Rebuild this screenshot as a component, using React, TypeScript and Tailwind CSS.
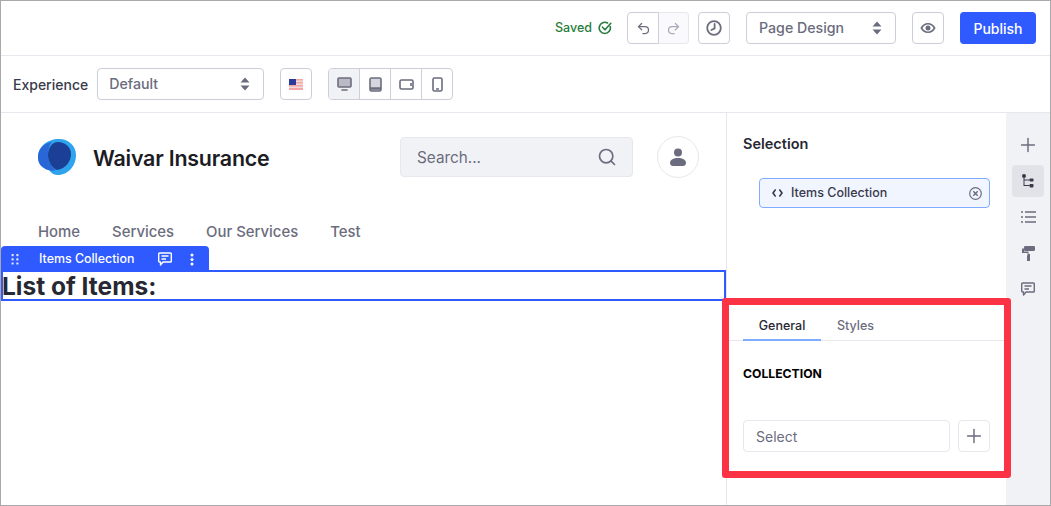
import React from 'react';
import { Undo2, Redo2, Search, Plus } from 'lucide-react';

const Updown = () => (
  <svg width="10" height="14" viewBox="0 0 10 14" fill="#6b6c7e">
    <path d="M5 0.5 9.5 5.5H0.5Z" />
    <path d="M5 13.5 0.5 8.5H9.5Z" />
  </svg>
);

const Clock = () => (
  <svg width="16" height="16" viewBox="0 0 16 16" fill="none" stroke="#6b6c7e" strokeWidth="1.8">
    <circle cx="8" cy="8" r="6.8" />
    <path d="M8.6 4v4.4L5.4 10" strokeLinecap="round" />
  </svg>
);

const Eye = () => (
  <svg width="16" height="12" viewBox="0 0 16 12" fill="#6b6c7e">
    <path fillRule="evenodd" d="M8 1C4.6 1 1.8 3 .4 6 1.8 9 4.6 11 8 11s6.2-2 7.6-5C14.2 3 11.4 1 8 1Zm0 1.6c2.3 0 4.3 1.3 5.5 3.4C12.3 8.1 10.3 9.4 8 9.4S3.7 8.1 2.5 6C3.7 3.9 5.7 2.6 8 2.6Z" />
    <circle cx="8" cy="6" r="2.5" />
  </svg>
);

const SavedCheck = () => (
  <svg width="14" height="14" viewBox="0 0 14 14" fill="none" stroke="#287d3c" strokeWidth="1.6" strokeLinecap="round" strokeLinejoin="round">
    <path d="M12.2 5.5A5.6 5.6 0 1 1 9.5 2" />
    <path d="M4.5 6.2 7 8.8 12.8 2.3" />
  </svg>
);

const Flag = () => (
  <svg width="14" height="11" viewBox="0 0 14 11">
    <rect width="14" height="11" fill="#f4a6a6" />
    <rect y="1.5" width="14" height="1.5" fill="#f2dada" />
    <rect y="4.5" width="14" height="1.5" fill="#f2dada" />
    <rect y="7.5" width="14" height="1.5" fill="#f2dada" />
    <rect width="7" height="6" fill="#2b3a9b" />
  </svg>
);

const Desktop = () => (
  <svg width="15" height="14" viewBox="0 0 15 14" fill="none" stroke="#6b6c7e" strokeWidth="1.6">
    <rect x="1" y="1" width="13" height="9" rx="1" fill="#b9bac4" />
    <path d="M5 13h5" strokeLinecap="round" />
  </svg>
);

const Tablet = () => (
  <svg width="13" height="15" viewBox="0 0 13 15" fill="none" stroke="#6b6c7e" strokeWidth="1.6">
    <rect x="1" y="1" width="11" height="13" rx="1.5" fill="#d5d6dd" />
    <path d="M1 11.5h11" strokeWidth="2.4" />
  </svg>
);

const Landscape = () => (
  <svg width="15" height="11" viewBox="0 0 15 11" fill="none" stroke="#6b6c7e" strokeWidth="1.6">
    <rect x="1" y="1" width="13" height="9" rx="1.5" />
    <path d="M12 4v3" />
  </svg>
);

const Phone = () => (
  <svg width="11" height="15" viewBox="0 0 11 15" fill="none" stroke="#6b6c7e" strokeWidth="1.6">
    <rect x="1" y="1" width="9" height="13" rx="1.5" />
    <path d="M4 12h3" />
  </svg>
);

const Logo = () => (
  <svg width="38" height="36" viewBox="0 0 38 36">
    <path d="M21 0c10 0 17 7 17 16 0 11-8 20-18 20-4 0-7-2-9-5C5 29 0 26 0 18 0 8 9 0 21 0Z" fill="#2ea3ee" />
    <path d="M14 3C6 4 0 10 0 18c0 7 4 11 10 13 3 1 6 1 8 0-5-3-8-8-8-15 0-5 1-10 4-13Z" fill="#2967d6" />
    <path d="M20 3c7 0 13 5 13 12 0 8-6 15-14 16-5-2-9-8-9-15 0-7 4-13 10-13Z" fill="#1b3f94" />
  </svg>
);

const User = () => (
  <svg width="16" height="18" viewBox="0 0 16 18" fill="#6b6c7e">
    <circle cx="8" cy="4.5" r="4" />
    <path d="M8 10c4.5 0 8 1.8 8 5 0 2-1.5 3-3 3H3c-1.5 0-3-1-3-3 0-3.2 3.5-5 8-5Z" />
  </svg>
);

const Comment = ({ color }: { color: string }) => (
  <svg width="14" height="14" viewBox="0 0 14 14" fill="none" stroke={color} strokeWidth="1.4">
    <path d="M1.5 1h11c.4 0 .8.4.8.8v7.4c0 .4-.4.8-.8.8H5L2.5 13v-3h-1c-.4 0-.8-.4-.8-.8V1.8c0-.4.4-.8.8-.8Z" strokeLinejoin="round" />
    <path d="M3.5 4h7M3.5 7h4.5" />
  </svg>
);

const Grip = () => (
  <svg width="8" height="11" viewBox="0 0 8 11" fill="#dfe6ff">
    {[0, 4.2, 8.4].map(y => (
      <React.Fragment key={y}>
        <rect x="0.5" y={y} width="2.2" height="2.2" rx="0.6" />
        <rect x="5.3" y={y} width="2.2" height="2.2" rx="0.6" />
      </React.Fragment>
    ))}
  </svg>
);

const Kebab = () => (
  <svg width="4" height="13" viewBox="0 0 4 13" fill="#fff">
    <circle cx="2" cy="2" r="1.5" />
    <circle cx="2" cy="6.5" r="1.5" />
    <circle cx="2" cy="11" r="1.5" />
  </svg>
);

const Code = () => (
  <svg width="11" height="8" viewBox="0 0 11 8" fill="none" stroke="#393a4a" strokeWidth="1.6" strokeLinecap="round" strokeLinejoin="round">
    <path d="M3.2 1 1 4l2.2 3M7.8 1 10 4 7.8 7" />
  </svg>
);

const CircleX = () => (
  <svg width="13" height="13" viewBox="0 0 13 13" fill="none" stroke="#6b6c7e" strokeWidth="1.2">
    <circle cx="6.5" cy="6.5" r="5.8" />
    <path d="M4.3 4.3l4.4 4.4M8.7 4.3 4.3 8.7" strokeWidth="1.5" />
  </svg>
);

const Tree = () => (
  <svg width="12" height="14" viewBox="0 0 12 14" fill="#393a4a">
    <circle cx="2" cy="2" r="2" />
    <rect x="7.5" y="4.5" width="4" height="3" rx="0.8" />
    <rect x="7.5" y="10" width="4" height="3.4" rx="0.8" />
    <path d="M1.5 3h1v2.5h5v1h-5v4.5h5v1h-6Z" />
  </svg>
);

const ListIcon = () => (
  <svg width="15" height="12" viewBox="0 0 15 12" fill="none" stroke="#6b6c7e" strokeWidth="1.3">
    <path d="M4 1h11M4 6h11M4 11h11M0 1h2M0 6h2M0 11h2" />
  </svg>
);

const Roller = () => (
  <svg width="13" height="15" viewBox="0 0 13 15" fill="#6b6c7e">
    <rect x="2" y="0" width="11" height="5" rx="1.2" />
    <path d="M0 2.5h2v3h4.5v2.5H8v7H5V9.5h.5V7H0Z" />
  </svg>
);

const Btn = ({ children, className = 'justify-center' }: { children: React.ReactNode; className?: string }) => (
  <div className={`flex items-center h-8 border border-[#cdced9] rounded-[4px] bg-white ${className}`}>{children}</div>
);

export default function App() {
  return (
    <div className="w-[1051px] h-[506px] overflow-hidden bg-white border border-[#a9a9ab] flex flex-col relative text-[#6b6c7e]" style={{ fontFamily: 'Inter, "Liberation Sans", sans-serif' }}>
      {/* top bar */}
      <div className="h-[55px] shrink-0 border-b border-[#e7e7ed] flex items-center justify-end pr-[14px]">
        <span className="text-[12.5px] font-medium text-[#287d3c] mr-[6px]">Saved</span>
        <SavedCheck />
        <div className="flex ml-[15px] mr-[9px]">
          <Btn className="justify-center w-8 rounded-r-none"><Undo2 size={15} strokeWidth={2} color="#6b6c7e" /></Btn>
          <div className="w-[30px] h-8 flex items-center justify-center border border-l-0 border-[#e7e7ed] rounded-r-[4px] bg-[#fafafc]"><Redo2 size={15} strokeWidth={2} color="#a7a9bc" /></div>
        </div>
        <Btn className="justify-center w-8 mr-[16px]"><Clock /></Btn>
        <Btn className="justify-between w-[150px] mr-[16px] pl-[12px] pr-[13px]">
          <span className="text-[14.2px] font-medium">Page Design</span>
          <Updown />
        </Btn>
        <Btn className="justify-center w-8 mr-[16px]"><Eye /></Btn>
        <div className="w-[76px] h-8 rounded-[4px] bg-[#2e5aff] text-white text-[14px] font-medium flex items-center justify-center">Publish</div>
      </div>

      {/* experience bar */}
      <div className="h-[57px] shrink-0 border-b border-[#e7e7ed] flex items-center pl-[12px]">
        <span className="text-[14px] font-medium text-[#393a4a] mr-[9px]">Experience</span>
        <Btn className="justify-between w-[167px] pl-[11px] pr-[13px] mr-[16px]">
          <span className="text-[14.2px] font-medium">Default</span>
          <Updown />
        </Btn>
        <Btn className="justify-center w-8 mr-[16px]"><Flag /></Btn>
        <div className="flex h-8 border border-[#cdced9] rounded-[4px] overflow-hidden">
          <div className="w-[30px] flex items-center justify-center bg-[#f1f2f5]"><Desktop /></div>
          <div className="w-[31px] flex items-center justify-center border-l border-[#cdced9]"><Tablet /></div>
          <div className="w-[31px] flex items-center justify-center border-l border-[#cdced9]"><Landscape /></div>
          <div className="w-[31px] flex items-center justify-center border-l border-[#cdced9]"><Phone /></div>
        </div>
      </div>

      <div className="flex flex-1 min-h-0">
        {/* page */}
        <div className="w-[725px] shrink-0 flex flex-col">
          <div className="flex items-center h-[88px] pl-[37px] shrink-0">
            <Logo />
            <span className="ml-[17px] pt-[2px] w-[176px] whitespace-nowrap text-[21.4px] font-semibold text-[#1c1c24] tracking-[-0.2px]">Waivar Insurance</span>
            <div className="ml-[131px] w-[233px] h-10 bg-[#f1f2f5] border border-[#e7e7ed] rounded-[4px] flex items-center justify-between pl-[16px] pr-[15px]">
              <span className="text-[15.3px] pt-[2px]">Search...</span>
              <Search size={20} strokeWidth={2} color="#6b6c7e" />
            </div>
            <div className="ml-[24px] w-[42px] h-[42px] rounded-full border border-[#e7e7ed] flex items-center justify-center"><User /></div>
          </div>
          <div className="flex gap-[32px] pl-[37px] pt-[19px] h-[45px] shrink-0 text-[14.9px] font-medium leading-[24px]">
            <span>Home</span>
            <span>Services</span>
            <span>Our Services</span>
            <span>Test</span>
          </div>
          <div className="w-[208px] h-[25px] shrink-0 -mb-[1px] relative bg-[#2e5aff] rounded-t-[4px] flex items-center text-white pl-[10px] pt-[1px]">
            <Grip />
            <span className="ml-[20px] text-[12.4px] font-medium">Items Collection</span>
            <span className="ml-[24px] flex"><Comment color="#fff" /></span>
            <span className="ml-[18px] flex"><Kebab /></span>
          </div>
          <div className="h-[31px] shrink-0 border-2 border-[#2e5aff] flex items-center pt-[1px] text-[24.5px] font-bold text-[#272833] leading-none"><span className="-ml-[1px]">List of Items:</span></div>
        </div>

        {/* selection panel */}
        <div className="w-[280px] shrink-0 border-l border-[#e7e7ed] flex flex-col">
          <div className="pl-[16px] pt-[21px] text-[14.5px] font-semibold text-[#272833] leading-[20px]">Selection</div>
          <div className="ml-[32px] mt-[24px] w-[231px] h-[30px] rounded-[4px] border border-[#80acff] bg-[#f0f5ff] flex items-center pl-[12px] pr-[7px]">
            <Code />
            <span className="ml-[8px] text-[12.5px] font-medium text-[#393a4a]">Items Collection</span>
            <span className="ml-auto flex"><CircleX /></span>
          </div>
          <div className="mt-[102px] flex px-[16px] h-[31px] border-b border-[#e7e7ed] text-[12.5px] font-medium">
            <div className="w-[78px] h-[31px] pt-[3px] flex items-center justify-center border-b-[2px] border-[#80acff] text-[#272833]">General</div>
            <div className="ml-[16px] flex items-center pt-[3px] h-[29px]">Styles</div>
          </div>
          <div className="pl-[16px] pt-[25px] text-[12.2px] font-bold text-black leading-[16px]">COLLECTION</div>
          <div className="flex pl-[16px] mt-[38px]">
            <div className="w-[207px] h-8 border border-[#e7e7ed] rounded-[4px] flex items-center pl-[12px] text-[14px]">Select</div>
            <div className="ml-[8px] w-8 h-8 border border-[#e7e7ed] rounded-[4px] flex items-center justify-center"><Plus size={22} strokeWidth={1.6} color="#6b6c7e" /></div>
          </div>
        </div>

        {/* rail */}
        <div className="flex-1 bg-[#f1f2f5] flex flex-col items-center pt-[16px] gap-[4px]">
          <div className="w-8 h-8 flex items-center justify-center"><Plus size={22} strokeWidth={1.6} color="#6b6c7e" /></div>
          <div className="w-8 h-8 flex items-center justify-center bg-[#e2e3e9] rounded-[4px]"><Tree /></div>
          <div className="w-8 h-8 flex items-center justify-center"><ListIcon /></div>
          <div className="w-8 h-8 flex items-center justify-center"><Roller /></div>
          <div className="w-8 h-8 flex items-center justify-center"><Comment color="#6b6c7e" /></div>
        </div>
      </div>

      {/* red highlight over the panel */}
      <div className="absolute left-[721px] top-[297px] w-[289px] h-[180px] border-[7px] border-[#fc3344] rounded-[3px] pointer-events-none" />
    </div>
  );
}
